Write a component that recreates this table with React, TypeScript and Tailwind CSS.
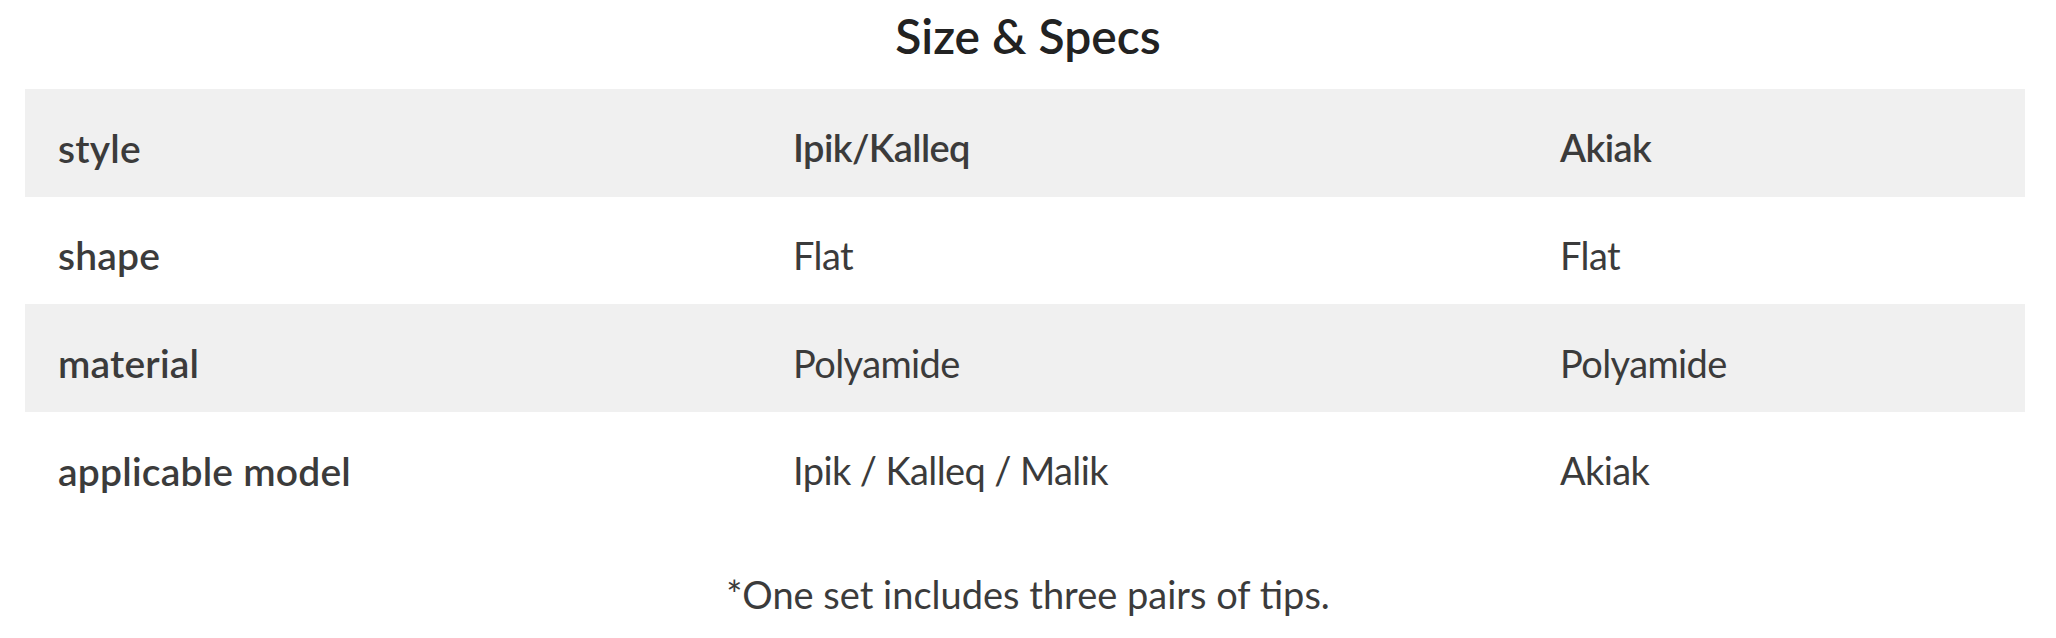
const rows = [
  { label: 'style', a: 'Ipik/Kalleq', b: 'Akiak', head: true },
  { label: 'shape', a: 'Flat', b: 'Flat' },
  { label: 'material', a: 'Polyamide', b: 'Polyamide' },
  { label: 'applicable model', a: 'Ipik / Kalleq / Malik', b: 'Akiak' },
];

export default function App() {
  return (
    <div className="min-h-[638px] w-[2056px] bg-white font-['Lato','Open_Sans',sans-serif] text-[#3b3b3b]">
      <h2 className="pt-[6px] text-center text-[48px] font-semibold leading-[60px] text-[#222]">Size &amp; Specs</h2>
      <div className="mx-[25px] mt-[23px] w-[2000px]">
        {rows.map((row, i) => (
          <div
            key={row.label}
            className={`grid h-[107.7px] grid-cols-[735px_767px_1fr] items-center pl-[33px] pt-[10px] text-[38px] tracking-[-0.6px] ${
              i % 2 === 0 ? 'bg-[#f0f0f0]' : 'bg-white'
            }`}
          >
            <div className="text-[39px] font-semibold tracking-[0.2px]">{row.label}</div>
            <div className={row.head ? 'font-semibold' : ''}>{row.a}</div>
            <div className={row.head ? 'font-semibold' : ''}>{row.b}</div>
          </div>
        ))}
      </div>
      <p className="mt-[44px] text-center text-[38px] leading-[60px]">*One set includes three pairs of tips.</p>
    </div>
  );
}
